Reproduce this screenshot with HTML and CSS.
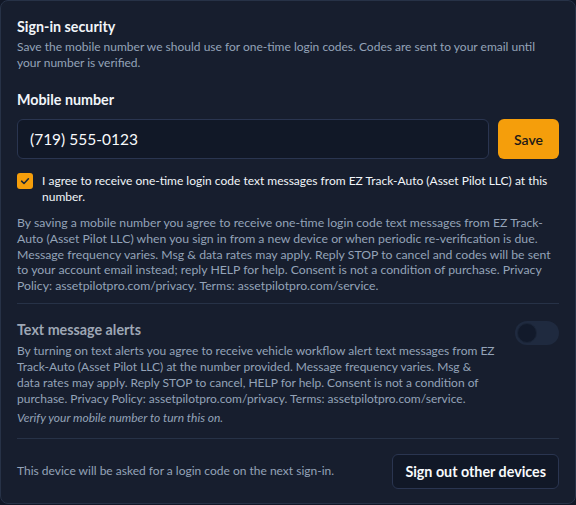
FILE: index.html
```html
<!DOCTYPE html>
<html lang="en">
<head>
<meta charset="utf-8">
<title>Sign-in security</title>
<link rel="stylesheet" href="styles.css">
</head>
<body>
<div class="card">
  <section class="section section-phone">
    <h2 class="title">Sign-in security</h2>
    <p class="desc">Save the mobile number we should use for one-time login codes. Codes are sent to your email until your number is verified.</p>

    <label class="field-label" for="phone">Mobile number</label>
    <div class="phone-row">
      <input id="phone" class="phone-input" type="text" value="(719) 555-0123">
      <button class="btn-save" type="button">Save</button>
    </div>

    <div class="consent">
      <span class="checkbox" aria-checked="true" role="checkbox">
        <svg viewBox="0 0 16 16" width="16" height="16"><path d="M4.6 8.2 L7 10.5 L11.4 5.8" fill="none" stroke="#1f2937" stroke-width="1.6" stroke-linecap="round" stroke-linejoin="round"/></svg>
      </span>
      <span class="consent-text">I agree to receive one-time login code text messages from EZ Track-Auto (Asset Pilot LLC) at this number.</span>
    </div>

    <p class="fine fine-main">By saving a mobile number you agree to receive one-time login code text messages from EZ Track-Auto (Asset Pilot LLC) when you sign in from a new device or when periodic re-verification is due. Message frequency varies. Msg &amp; data rates may apply. Reply STOP to cancel and codes will be sent to your account email instead; reply HELP for help. Consent is not a condition of purchase. Privacy Policy: assetpilotpro.com/privacy. Terms: assetpilotpro.com/service.</p>
  </section>

  <section class="section alerts">
    <div class="alerts-main">
      <h3 class="alerts-title">Text message alerts</h3>
      <p class="fine">By turning on text alerts you agree to receive vehicle workflow alert text messages from EZ Track-Auto (Asset Pilot LLC) at the number provided. Message frequency varies. Msg &amp; data rates may apply. Reply STOP to cancel, HELP for help. Consent is not a condition of purchase. Privacy Policy: assetpilotpro.com/privacy. Terms: assetpilotpro.com/service.</p>
      <p class="hint">Verify your mobile number to turn this on.</p>
    </div>
    <span class="toggle" role="switch" aria-checked="false"><span class="knob"></span></span>
  </section>

  <section class="section footer">
    <p class="footer-text">This device will be asked for a login code on the next sign-in.</p>
    <button class="btn-outline" type="button">Sign out other devices</button>
  </section>
</div>
</body>
</html>
```

FILE: styles.css
```css
* { box-sizing: border-box; }
html, body { margin: 0; padding: 0; background: #111726; }
body {
  font-family: "Lato", "Noto Sans", sans-serif;
  color: #e5e7eb;
  font-size: 12px;
  line-height: 16px;
}
.card {
  width: 576px;
  height: 504px;
  background: #171e2e;
  border: 1px solid #273247;
  border-radius: 8px;
  padding: 16px 16px 0;
  display: flex;
  flex-direction: column;
}
.section { padding-bottom: 10px; }
.section + .section { border-top: 1px solid #273247; padding-top: 15px; }
.section-phone { padding-bottom: 9px; }
.title {
  margin: 0;
  font-size: 14.3px;
  line-height: 20px;
  font-weight: 700;
  color: #f1f5f9;
}
.desc { margin: 2px 0 0; color: #94a3b8; }
.field-label {
  display: block;
  margin-top: 19px;
  font-size: 14.3px;
  line-height: 20px;
  font-weight: 700;
  color: #f1f5f9;
}
.phone-row { display: flex; gap: 9px; margin-top: 9px; }
.phone-input {
  flex: 1;
  min-width: 0;
  height: 40px;
  background: #111827;
  border: 1px solid #2a3550;
  border-radius: 6px;
  padding: 0 12px;
  color: #f8fafc;
  font: 15.5px "Lato", "Noto Sans", sans-serif;
  outline: none;
}
.btn-save {
  flex: none;
  width: 61px;
  height: 40px;
  border: 0;
  border-radius: 6px;
  background: #f59e0b;
  color: #1c1917;
  font: 600 14px "Lato", "Noto Sans", sans-serif;
}
.consent { display: flex; gap: 9px; margin-top: 14px; }
.checkbox {
  flex: none;
  width: 16px; height: 16px;
  border-radius: 3px;
  background: #f59e0b;
  display: flex;
}
.consent-text { color: #f1f5f9; }
.fine { margin: 10px 0 0; color: #94a3b8; }
.fine-main { font-size: 12.25px; line-height: 15.8px; }
.alerts {
  display: flex;
  align-items: flex-start;
  justify-content: space-between;
  padding-bottom: 12px;
}
.section.alerts { padding-top: 16px; }
.alerts-main { flex: none; width: 479px; }
.alerts-title {
  margin: 0;
  font-size: 14.3px;
  line-height: 20px;
  font-weight: 700;
  color: #9ea7b5;
}
.alerts .fine { margin-top: 3px; }
.hint { margin: 3px 0 0; font-style: italic; color: #94a3b8; }
.toggle {
  flex: none;
  width: 44px; height: 24px;
  border-radius: 12px;
  background: #1f2a3f;
  padding: 2px;
  display: flex;
  margin-top: 1px;
}
.knob {
  width: 20px; height: 20px;
  border-radius: 50%;
  background: #121a2b;
  border: 1px solid #1b2538;
}
.footer { display: flex; align-items: center; justify-content: space-between; padding-top: 13px; }
.footer-text { margin: 0; color: #94a3b8; font-size: 12px; }
.btn-outline {
  height: 35px;
  padding: 0 12px;
  background: #111827;
  border: 1px solid #2a3550;
  border-radius: 6px;
  color: #f8fafc;
  font: 700 14.3px "Lato", "Noto Sans", sans-serif;
}
```
